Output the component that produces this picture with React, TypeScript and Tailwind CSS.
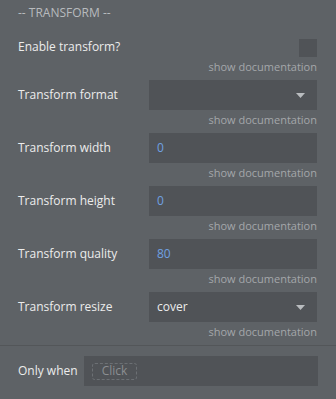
import React from 'react';

const Caret = () => (
  <svg width="9" height="5" viewBox="0 0 9 5" className="shrink-0">
    <path d="M0 0h9L4.5 5z" fill="#b9bcbf" />
  </svg>
);

const Doc = () => (
  <div className="h-[18px] flex items-center justify-end text-[11px] text-[#a4a7aa] leading-none">
    show documentation
  </div>
);

type Field = { label: string; value?: string; kind: 'select' | 'number' };

const fields: Field[] = [
  { label: 'Transform format', kind: 'select' },
  { label: 'Transform width', value: '0', kind: 'number' },
  { label: 'Transform height', value: '0', kind: 'number' },
  { label: 'Transform quality', value: '80', kind: 'number' },
  { label: 'Transform resize', value: 'cover', kind: 'select' },
];

export default function App() {
  return (
    <div
      className="w-[336px] h-[399px] bg-[#5e6266] text-[#ececec] overflow-hidden"
      style={{ fontFamily: '"Open Sans", "Noto Sans", sans-serif' }}
    >
      <div className="pl-[18px] pr-[19px]">
        <div className="h-[18px] mt-[4px] flex items-center text-[12px] text-[#b8bbbe]">
          -- TRANSFORM --
        </div>
        <div className="mt-[17px] h-[18px] flex items-center justify-between">
          <span className="text-[12px] -mt-[3px]">Enable transform?</span>
          <div className="w-[18px] h-[18px] bg-[#505357]" />
        </div>
        <Doc />
        {fields.map((f) => (
          <div key={f.label} className="mt-[5px]">
            <div className="flex items-center h-[30px]">
              <span className="w-[131px] text-[12px]">{f.label}</span>
              <div className="flex-1 h-[30px] bg-[#505357] flex items-center justify-between pl-[8px] pr-[12px]">
                <span
                  className={
                    f.kind === 'number'
                      ? 'text-[12px] text-[#6fa1e2]'
                      : 'text-[12px] text-[#ececec]'
                  }
                >
                  {f.value}
                </span>
                {f.kind === 'select' && <Caret />}
              </div>
            </div>
            <Doc />
          </div>
        ))}
      </div>
      <div className="mt-[5px] h-px bg-[#535659]" />
      <div className="mt-[10px] pl-[18px] pr-[18px] flex items-center h-[30px]">
        <span className="w-[66px] text-[12px]">Only when</span>
        <div className="flex-1 h-[30px] bg-[#505357] flex items-center pl-[8px]">
          <span className="h-[17px] w-[45px] flex items-center justify-center rounded-[3px] border border-dashed border-[#6c7074] text-[12px] text-[#8b8e91]">
            Click
          </span>
        </div>
      </div>
    </div>
  );
}
